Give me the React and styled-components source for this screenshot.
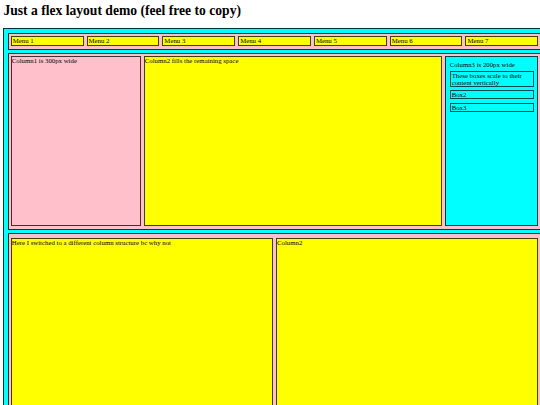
import React from "react";
import styled, { createGlobalStyle } from "styled-components";

const GlobalStyle = createGlobalStyle`
  body {
    margin: 0;
    font-family: "Liberation Serif", "Times New Roman", serif;
    font-size: 6.8px;
    color: #000;
    background: #fff;
  }
`;

const menus = ["Menu 1", "Menu 2", "Menu 3", "Menu 4", "Menu 5", "Menu 6", "Menu 7"];

export default function App() {
  return (
    <Page>
      <GlobalStyle />
      <Title>Just a flex layout demo (feel free to copy)</Title>
      <Container>
        <Row>
          {menus.map((m) => (
            <MenuItem key={m}>{m}</MenuItem>
          ))}
        </Row>
        <Row $pad="2.5px 2px">
          <Column $width="130px" $bg="pink" $height="170px">
            Column1 is 300px wide
          </Column>
          <Column $bg="yellow" $height="170px">
            Column2 fills the remaining space
          </Column>
          <SideColumn>
            <div>Column3 is 200px wide</div>
            <Box>These boxes scale to their content vertically</Box>
            <Box>Box2</Box>
            <Box>Box3</Box>
          </SideColumn>
        </Row>
        <Row $pad="4px 2px">
          <Column $bg="yellow" $height="300px">
            Here I switched to a different column structure bc why not
          </Column>
          <Column $bg="yellow" $height="300px">
            Column2
          </Column>
        </Row>
      </Container>
    </Page>
  );
}

const Page = styled.div`
  width: 100%;
  height: 405px;
  box-sizing: border-box;
  padding: 3.4px 0 0 3.4px;
  overflow: hidden;
`;

const Title = styled.h1`
  font-size: 13.6px;
  font-weight: bold;
  margin: 0 0 9px 0;
`;

const Container = styled.div`
  width: 533.5px;
  display: flex;
  flex-direction: column;
  gap: 3px;
  padding: 3.4px;
  background: #00ffff;
  border: 1px solid rgba(0, 0, 0, 0.8);
`;

const Row = styled.div`
  display: flex;
  gap: 3px;
  padding: ${(p) => p.$pad || "2.2px 2px"};
  background: pink;
  border: 1px solid rgba(0, 0, 0, 0.8);
`;

const MenuItem = styled.div`
  flex: 1;
  height: 10.5px;
  box-sizing: border-box;
  padding: 0 1px;
  line-height: 8.5px;
  background: yellow;
  border: 1px solid rgba(0, 0, 0, 0.75);
`;

const Column = styled.div`
  flex: ${(p) => (p.$width ? `0 0 ${p.$width}` : "1")};
  height: ${(p) => p.$height};
  box-sizing: border-box;
  background: ${(p) => p.$bg};
  border: 1px solid rgba(0, 0, 0, 0.75);
`;

const SideColumn = styled.div`
  flex: 0 0 93px;
  height: 170px;
  box-sizing: border-box;
  display: flex;
  flex-direction: column;
  gap: 3.4px;
  padding: 3.4px;
  background: #00ffff;
  border: 1px solid rgba(0, 0, 0, 0.75);
`;

const Box = styled.div`
  padding: 0 1px;
  border: 1px solid rgba(0, 0, 0, 0.7);
`;
